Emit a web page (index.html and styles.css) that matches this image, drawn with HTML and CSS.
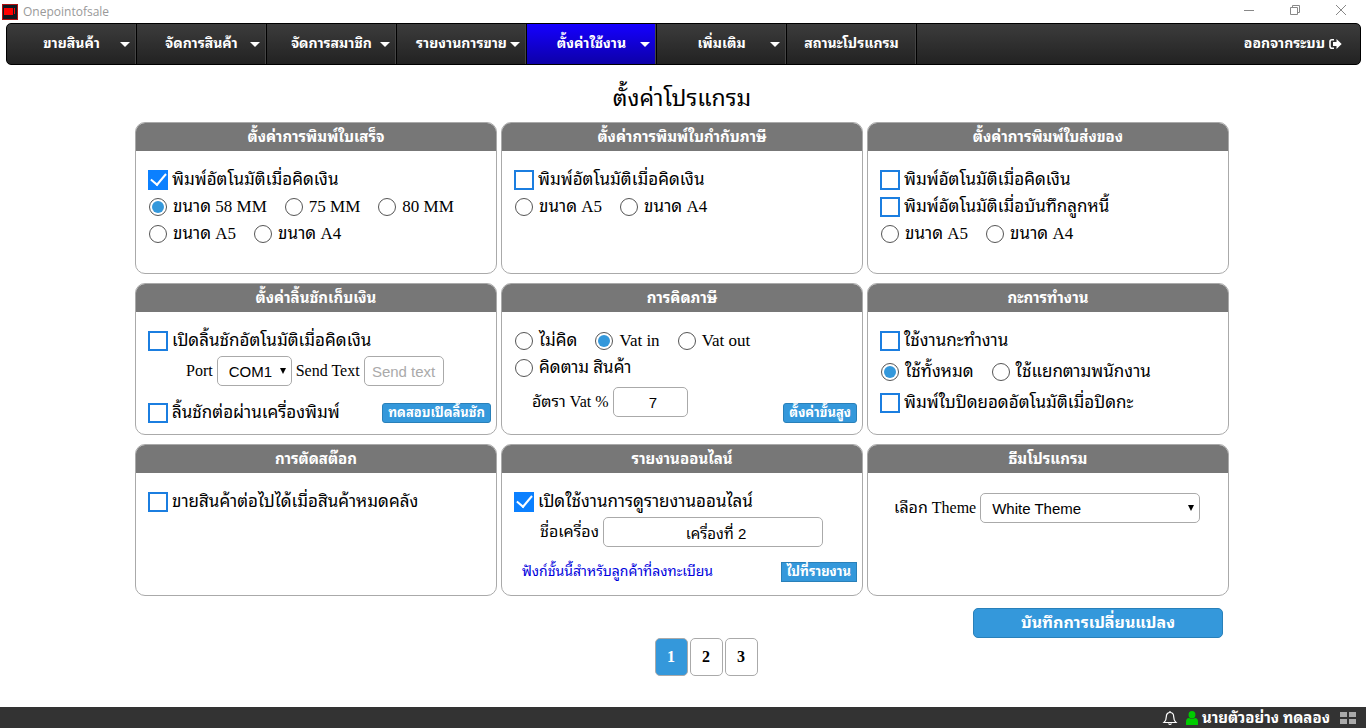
FILE: index.html
```html
<!DOCTYPE html>
<html lang="th">
<head>
<meta charset="utf-8">
<meta name="viewport" content="width=device-width, initial-scale=1">
<title>Onepointofsale</title>
<link rel="stylesheet" href="styles.css">
</head>
<body>
<header class="titlebar">
  <svg class="app-icon" viewBox="0 0 16 16" aria-hidden="true"><path fill="#b01010" d="M0 0h16v16H0z"/><path fill="#111820" d="M1 1h14v14H1z"/><path fill="#f00" d="M2 4h9v7H2zM12 4h1v6h-1z"/></svg>
  <span class="app-name">Onepointofsale</span>
  <div class="window-buttons">
    <button type="button" aria-label="Minimize"><svg viewBox="0 0 12 12"><path d="M1 6.500h10"/></svg></button>
    <button type="button" aria-label="Restore"><svg viewBox="0 0 12 12"><path d="M1.500 3.500h7v7h-7zM3.500 3.500v-2h7v7h-2"/></svg></button>
    <button type="button" aria-label="Close"><svg viewBox="0 0 12 12"><path d="M1 1l10 10M11 1L1 11"/></svg></button>
  </div>
</header>

<nav class="menu">
  <a href="#" class="menu-item has-sub">ขายสินค้า</a>
  <a href="#" class="menu-item has-sub">จัดการสินค้า</a>
  <a href="#" class="menu-item has-sub">จัดการสมาชิก</a>
  <a href="#" class="menu-item has-sub">รายงานการขาย</a>
  <a href="#" class="menu-item has-sub active">ตั้งค่าใช้งาน</a>
  <a href="#" class="menu-item has-sub">เพิ่มเติม</a>
  <a href="#" class="menu-item">สถานะโปรแกรม</a>
  <a href="#" class="logout">ออกจากระบบ
    <svg viewBox="0 0 13 12" aria-hidden="true"><path fill="none" stroke="#fff" stroke-width="1.600" d="M5 1.800H3Q1 1.800 1 3.800v4.400q0 2 2 2h2"/><path fill="#fff" d="M4 4h3.500V1L12.700 6l-5.200 5V8H4z"/></svg></a>
</nav>

<main class="settings">
  <h1>ตั้งค่าโปรแกรม</h1>
  <div class="cards">
    <section class="card">
      <h2>ตั้งค่าการพิมพ์ใบเสร็จ</h2>
      <div class="card-body">
        <div class="row"><label><input type="checkbox" checked>พิมพ์อัตโนมัติเมื่อคิดเงิน</label></div>
        <div class="row"><label><input type="radio" name="receipt" checked>ขนาด 58 MM</label><label><input type="radio" name="receipt">75 MM</label><label><input type="radio" name="receipt">80 MM</label></div>
        <div class="row"><label><input type="radio" name="receipt">ขนาด A5</label><label><input type="radio" name="receipt">ขนาด A4</label></div>
      </div>
    </section>

    <section class="card">
      <h2>ตั้งค่าการพิมพ์ใบกำกับภาษี</h2>
      <div class="card-body">
        <div class="row"><label><input type="checkbox">พิมพ์อัตโนมัติเมื่อคิดเงิน</label></div>
        <div class="row"><label><input type="radio" name="invoice">ขนาด A5</label><label><input type="radio" name="invoice">ขนาด A4</label></div>
      </div>
    </section>

    <section class="card">
      <h2>ตั้งค่าการพิมพ์ใบส่งของ</h2>
      <div class="card-body">
        <div class="row"><label><input type="checkbox">พิมพ์อัตโนมัติเมื่อคิดเงิน</label></div>
        <div class="row"><label><input type="checkbox">พิมพ์อัตโนมัติเมื่อบันทึกลูกหนี้</label></div>
        <div class="row"><label><input type="radio" name="delivery">ขนาด A5</label><label><input type="radio" name="delivery">ขนาด A4</label></div>
      </div>
    </section>

    <section class="card">
      <h2>ตั้งค่าลิ้นชักเก็บเงิน</h2>
      <div class="card-body">
        <div class="row"><label><input type="checkbox">เปิดลิ้นชักอัตโนมัติเมื่อคิดเงิน</label></div>
        <div class="row fields drawer-fields">
          <label for="port">Port</label>
          <span class="select port"><select id="port"><option>COM1</option></select></span>
          <label for="sendtext">Send Text</label>
          <input class="box send" id="sendtext" type="text" placeholder="Send text">
        </div>
        <div class="row drawer-last"><label><input type="checkbox">ลิ้นชักต่อผ่านเครื่องพิมพ์</label><button type="button" class="btn small">ทดสอบเปิดลิ้นชัก</button></div>
      </div>
    </section>

    <section class="card">
      <h2>การคิดภาษี</h2>
      <div class="card-body">
        <div class="row"><label><input type="radio" name="vat">ไม่คิด</label><label><input type="radio" name="vat" checked>Vat in</label><label><input type="radio" name="vat">Vat out</label></div>
        <div class="row"><label><input type="radio" name="vat">คิดตาม สินค้า</label></div>
        <div class="row fields vat-fields">
          <label for="rate">อัตรา Vat %</label>
          <input class="box rate" id="rate" type="text" value="7">
          <button type="button" class="btn small">ตั้งค่าขั้นสูง</button>
        </div>
      </div>
    </section>

    <section class="card">
      <h2>กะการทำงาน</h2>
      <div class="card-body spaced">
        <div class="row"><label><input type="checkbox">ใช้งานกะทำงาน</label></div>
        <div class="row"><label><input type="radio" name="shift" checked>ใช้ทั้งหมด</label><label><input type="radio" name="shift">ใช้แยกตามพนักงาน</label></div>
        <div class="row"><label><input type="checkbox">พิมพ์ใบปิดยอดอัตโนมัติเมื่อปิดกะ</label></div>
      </div>
    </section>

    <section class="card">
      <h2>การตัดสต๊อก</h2>
      <div class="card-body">
        <div class="row"><label><input type="checkbox">ขายสินค้าต่อไปได้เมื่อสินค้าหมดคลัง</label></div>
      </div>
    </section>

    <section class="card">
      <h2>รายงานออนไลน์</h2>
      <div class="card-body">
        <div class="row"><label><input type="checkbox" checked>เปิดใช้งานการดูรายงานออนไลน์</label></div>
        <div class="row fields machine-fields">
          <label for="machine">ชื่อเครื่อง</label>
          <input class="box machine" id="machine" type="text" value="เครื่องที่ 2">
        </div>
        <div class="row online-last"><a href="#" class="note">ฟังก์ชั้นนี้สำหรับลูกค้าที่ลงทะเบียน</a><button type="button" class="btn small square">ไปที่รายงาน</button></div>
      </div>
    </section>

    <section class="card">
      <h2>ธีมโปรแกรม</h2>
      <div class="card-body theme">
        <div class="row fields">
          <label for="theme">เลือก Theme</label>
          <span class="select theme-select"><select id="theme"><option>White Theme</option></select></span>
        </div>
      </div>
    </section>
  </div>
  <div class="save-row"><button type="button" class="btn save">บันทึกการเปลี่ยนแปลง</button></div>
  <div class="pages">
    <button type="button" class="page current">1</button>
    <button type="button" class="page">2</button>
    <button type="button" class="page">3</button>
  </div>
</main>

<footer class="statusbar">
  <svg class="bell" viewBox="0 0 16 16" aria-hidden="true"><path fill="none" stroke="#fff" stroke-width="1.200" d="M8 1v1.500M2 12.500c2-1.800 2.300-3.500 2.300-5.800C4.300 4 6 2.500 8 2.500s3.700 1.500 3.700 4.200c0 2.300.3 4 2.300 5.800zM6.500 13.500q1.500 2 3 0"/></svg>
  <svg class="person" viewBox="0 0 12 14" aria-hidden="true"><path fill="#0c0" d="M6 0a3.300 3.600 0 0 1 0 7.500A3.300 3.600 0 0 1 6 0zM0 14v-3q0-4 3-4 3 2 6 0 3 0 3 4v3z"/></svg>
  <span class="user">นายตัวอย่าง ทดลอง</span>
  <svg class="tiles" viewBox="0 0 16 14" aria-hidden="true"><path fill="#aaa" d="M0 1h7v5H0zM9 1h7v5H9zM0 8h7v5H0zM9 8h7v5H9z"/></svg>
</footer>
</body>
</html>
```
FILE: styles.css
```css
* { box-sizing: border-box; }

body {
  margin: 0;
  min-height: 100vh;
  display: flex;
  flex-direction: column;
  background: #fff;
  color: #000;
  font-family: "Liberation Serif", "Noto Sans Thai Looped", Loma, Waree, "Noto Sans Thai", serif;
  font-size: 16px;
}

button, input, select { font: inherit; margin: 0; }
button { cursor: pointer; }

.titlebar {
  display: flex;
  align-items: center;
  height: 23px;
  padding-left: 2px;
}
.app-icon { width: 16px; height: 16px; }
.app-name {
  margin-left: 5px;
  color: #999;
  font: 12px/16px "Open Sans", sans-serif;
}
.window-buttons {
  display: flex;
  align-self: flex-start;
  margin-left: auto;
  padding-right: 2px;
}
.window-buttons button {
  display: flex;
  align-items: center;
  justify-content: center;
  width: 46px;
  height: 20px;
  padding: 0;
  border: 0;
  background: none;
}
.window-buttons svg {
  width: 12px;
  height: 12px;
  fill: none;
  stroke: #888;
}

.menu {
  display: flex;
  height: 42px;
  margin: 0 5px 0 6px;
  border: 1px solid #000;
  border-radius: 5px;
  overflow: hidden;
  background: linear-gradient(#3c3c3c, #222);
}
.menu a {
  display: flex;
  align-items: center;
  justify-content: center;
  color: #fff;
  text-decoration: none;
  font-size: 14px;
  line-height: 20px;
  font-weight: bold;
  white-space: nowrap;
}
.menu-item {
  position: relative;
  width: 130px;
  border-right: 1px solid #000;
  box-shadow: inset -1px 0 #444;
}
.menu .active { background: linear-gradient(#1500ff, #0d00a8); }
.has-sub::after {
  content: "";
  position: absolute;
  right: 6px;
  top: 18px;
  border: 5px solid transparent;
  border-top-color: #fff;
  border-bottom: 0;
}
.menu .logout { gap: 4px; margin-left: auto; padding-right: 18px; }
.logout svg { width: 13px; height: 12px; }

.settings {
  flex: 1;
  width: 100%;
  max-width: 1096px;
  margin: 0 auto;
  padding-right: 2px;
}
h1 {
  margin: 0;
  padding-top: 18px;
  height: 57px;
  text-align: center;
  font-size: 23px;
  line-height: 32px;
  font-weight: normal;
}
.cards {
  display: grid;
  grid-template-columns: repeat(3, 1fr);
  gap: 9px 4px;
}
.card {
  min-height: 152px;
  border: 1px solid #aaa;
  border-radius: 10px;
  overflow: hidden;
}
.card h2 {
  margin: 0;
  background: #777;
  color: #fff;
  text-align: center;
  font-size: 15px;
  line-height: 28px;
  height: 28px;
}
.card-body { padding: 15px 5px 0 12px; font-size: 17px; }
.row {
  display: flex;
  align-items: center;
  gap: 17px;
  height: 27px;
  white-space: nowrap;
}
.row label { display: flex; align-items: center; line-height: 20px; }

input[type="checkbox"], input[type="radio"] {
  appearance: none;
  flex: none;
  display: grid;
  place-items: center;
}
input[type="checkbox"] {
  width: 20px;
  height: 20px;
  margin-right: 4px;
  border: 2px solid #1b7ee0;
}
input[type="checkbox"]:checked { background: #0b80ff; border-color: #0b80ff; }
input[type="checkbox"]:checked::after {
  content: "";
  width: 13px;
  height: 7px;
  margin-bottom: 4px;
  border: solid #fff;
  border-width: 0 0 2px 2px;
  transform: rotate(-50deg);
}
input[type="radio"] {
  width: 18px;
  height: 18px;
  margin: 0 6px 0 1px;
  border: 1px solid #555;
  border-radius: 50%;
}
input[type="radio"]:checked::after {
  content: "";
  width: 12px;
  height: 12px;
  border-radius: 50%;
  background: #3498db;
}

.fields { gap: 4px; height: 30px; font-size: 16px; }
.box, .select select {
  height: 30px;
  border: 1px solid #aaa;
  border-radius: 5px;
  background: #fff;
  color: #000;
  font: 15px "Liberation Sans", "Noto Sans Thai Looped", Loma, Waree, "Noto Sans Thai", sans-serif;
}
.box { padding: 0; text-align: center; }
.box::placeholder { color: #aaa; }
.select { position: relative; }
.select select { appearance: none; width: 100%; padding: 0 11px; }
.select::after {
  content: "";
  position: absolute;
  right: 6px;
  top: 12px;
  border: 3px solid transparent;
  border-top: 6px solid #000;
  border-bottom: 0;
  pointer-events: none;
}
.port { width: 75px; }
.send { width: 80px; }
.rate { width: 75px; padding-left: 6px; }
.machine { width: 220px; padding-left: 6px; }
.theme-select { width: 220px; }

.drawer-fields { margin-top: 2px; padding-left: 38px; }
.drawer-last { margin-top: 13px; }
.vat-fields { margin-top: 6px; padding-left: 18px; height: 36px; align-items: flex-start; }
.vat-fields label { height: 30px; }
.vat-fields .btn { align-self: flex-end; }
.spaced { display: grid; gap: 4px; }
.machine-fields { margin-top: 2px; padding-left: 26px; }
.online-last { margin-top: 11px; padding-left: 8px; }
.theme { padding-top: 20px; padding-left: 26px; }
.note { color: #00d; font-size: 14px; line-height: 20px; text-decoration: none; }

.btn {
  border: 1px solid #2980b9;
  border-radius: 5px;
  background: #3498db;
  color: #fff;
  font-weight: bold;
  white-space: nowrap;
}
.small {
  height: 20px;
  margin-left: auto;
  padding: 0 5px;
  border-radius: 3px;
  font-size: 13px;
  line-height: 18px;
}
.square { border-radius: 0; }

.save-row { display: flex; justify-content: flex-end; padding: 12px 6px 0 0; }
.save { width: 250px; height: 30px; padding: 0; font-size: 16px; line-height: 28px; }
.pages { display: flex; justify-content: center; gap: 2px; padding-left: 48px; }
.page {
  width: 33px;
  height: 38px;
  padding: 0;
  border: 1px solid #aaa;
  border-radius: 5px;
  background: #fff;
  color: #000;
  font-size: 16px;
  font-weight: bold;
}
.current { background: #3498db; color: #fff; }

.statusbar {
  display: flex;
  align-items: center;
  justify-content: flex-end;
  height: 21px;
  padding-right: 10px;
  background: #333;
  color: #fff;
}
.bell { width: 16px; height: 16px; margin-right: 8px; }
.person { width: 12px; height: 14px; margin-right: 4px; }
.user { font-size: 15px; line-height: 20px; font-weight: bold; }
.tiles { width: 16px; height: 14px; margin-left: 10px; }
```
